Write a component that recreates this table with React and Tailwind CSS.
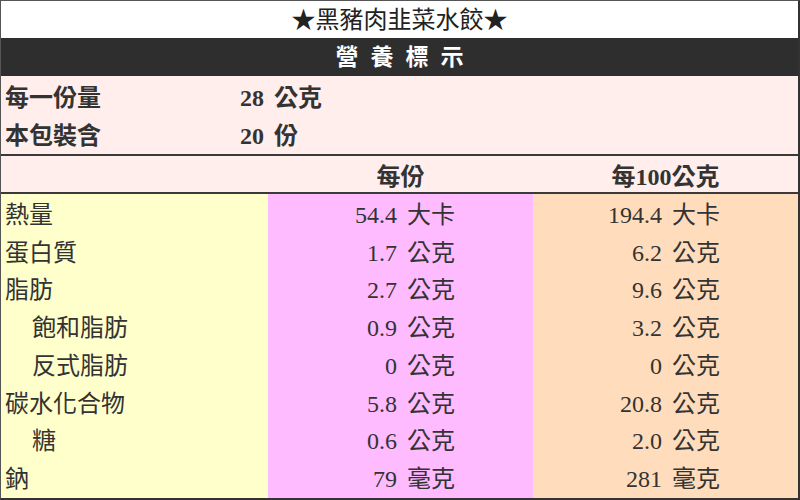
import React from 'react';

const FONT = { fontFamily: '"Liberation Serif", "Noto Sans CJK TC", serif' };

const ROWS = [
  { name: '熱量', per: ['54.4', '大卡'], per100: ['194.4', '大卡'] },
  { name: '蛋白質', per: ['1.7', '公克'], per100: ['6.2', '公克'] },
  { name: '脂肪', per: ['2.7', '公克'], per100: ['9.6', '公克'] },
  { name: '飽和脂肪', per: ['0.9', '公克'], per100: ['3.2', '公克'], indent: true },
  { name: '反式脂肪', per: ['0', '公克'], per100: ['0', '公克'], indent: true },
  { name: '碳水化合物', per: ['5.8', '公克'], per100: ['20.8', '公克'] },
  { name: '糖', per: ['0.6', '公克'], per100: ['2.0', '公克'], indent: true },
  { name: '鈉', per: ['79', '毫克'], per100: ['281', '毫克'] },
];

const Amount = ({ v }) => (
  <span className="flex items-center gap-[10px]">
    <span>{v[0]}</span>
    <span>{v[1]}</span>
  </span>
);

export default function App() {
  return (
    <div className="w-[800px] h-[500px] bg-white text-[#333] text-[24px] leading-none" style={FONT}>
      <div className="h-full flex flex-col border-t border-l border-[#555] border-r-2 border-b-2 border-r-[#333] border-b-[#333]">
        {/* Title */}
        <div className="h-[37px] flex items-center justify-center text-[#222]">★黑豬肉韭菜水餃★</div>

        {/* Header bar */}
        <div className="h-[38px] bg-[#2e2e2e] flex items-center justify-center text-white font-bold tracking-[12px] pl-[12px] text-[23px]">
          營養標示
        </div>

        {/* Serving info */}
        <div className="bg-[#ffeeec] font-bold pt-[3px]">
          <div className="h-[38px] flex items-center">
            <span className="w-[239px] pl-[4px]">每一份量</span>
            <Amount v={['28', '公克']} />
          </div>
          <div className="h-[37px] flex items-center">
            <span className="w-[239px] pl-[4px]">本包裝含</span>
            <Amount v={['20', '份']} />
          </div>
        </div>

        <div className="h-[2px] bg-[#3a3a3a]" />

        <div className="h-[36px] bg-[#ffeeec] font-bold grid grid-cols-[267px_265px_1fr] items-center pt-[5px]">
          <span />
          <span className="text-center">每份</span>
          <span className="text-center">每100公克</span>
        </div>

        <div className="h-[2px] bg-[#3a3a3a]" />

        {/* Nutrients */}
        <div className="flex-1 grid grid-cols-[267px_265px_1fr]">
          <div className="bg-[#ffffcc] flex flex-col pt-[2px]">
            {ROWS.map((r) => (
              <div key={r.name} className={`flex-1 flex items-center ${r.indent ? 'pl-[31px]' : 'pl-[4px]'}`}>
                {r.name}
              </div>
            ))}
          </div>
          <div className="bg-[#ffbbff] flex flex-col pt-[2px]">
            {ROWS.map((r) => (
              <div key={r.name} className="flex-1 flex items-center justify-end pr-[78px]">
                <Amount v={r.per} />
              </div>
            ))}
          </div>
          <div className="bg-[#ffdcbc] flex flex-col pt-[2px]">
            {ROWS.map((r) => (
              <div key={r.name} className="flex-1 flex items-center justify-end pr-[78px]">
                <Amount v={r.per100} />
              </div>
            ))}
          </div>
        </div>
      </div>
    </div>
  );
}
